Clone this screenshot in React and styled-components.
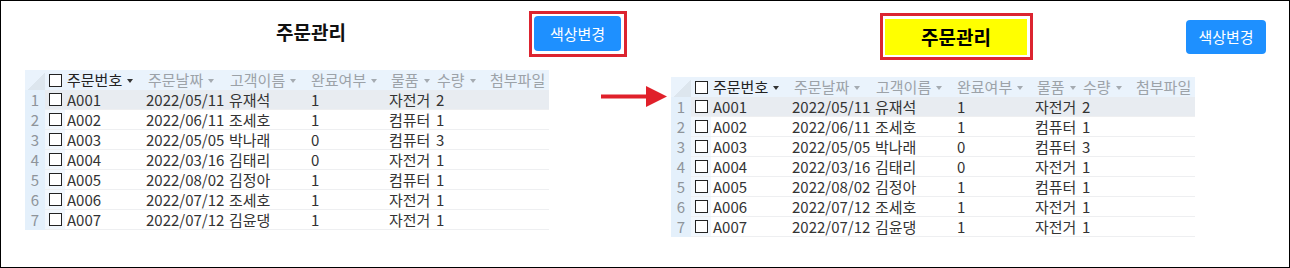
import React from 'react';
import styled, { createGlobalStyle } from 'styled-components';

const GlobalStyle = createGlobalStyle`
  body {
    margin: 0;
    background: #fff;
    font-family: "Noto Sans CJK KR", "Noto Sans", sans-serif;
  }
`;

const orders = [
  { id: 'A001', date: '2022/05/11', name: '유재석', done: '1', item: '자전거', qty: '2' },
  { id: 'A002', date: '2022/06/11', name: '조세호', done: '1', item: '컴퓨터', qty: '1' },
  { id: 'A003', date: '2022/05/05', name: '박나래', done: '0', item: '컴퓨터', qty: '3' },
  { id: 'A004', date: '2022/03/16', name: '김태리', done: '0', item: '자전거', qty: '1' },
  { id: 'A005', date: '2022/08/02', name: '김정아', done: '1', item: '컴퓨터', qty: '1' },
  { id: 'A006', date: '2022/07/12', name: '조세호', done: '1', item: '자전거', qty: '1' },
  { id: 'A007', date: '2022/07/12', name: '김윤댕', done: '1', item: '자전거', qty: '1' },
];

const columns = ['주문날짜', '고객이름', '완료여부', '물품', '수량'];

const COLS = '20px 20px 81px 82px 81px 80px 46px 53px 61px';

const Frame = styled.div`
  position: relative;
  width: 1290px;
  height: 268px;
  box-sizing: border-box;
  border: 1px solid #000;
  display: flex;
  overflow: hidden;
`;

const Panel = styled.section`
  width: ${p => p.$width}px;
  display: flex;
  flex-direction: column;
`;

const TopBar = styled.div`
  height: ${p => p.$height}px;
  display: flex;
  align-items: flex-start;
`;

const Title = styled.h2`
  margin: 19px 0 0 250px;
  width: 120px;
  text-align: center;
  font-size: 19px;
  line-height: 24px;
  font-weight: 700;
  color: #111;
`;

const Marked = styled.div`
  box-sizing: border-box;
  border: 3px solid #dc2430;
  padding: ${p => p.$pad};
  margin: ${p => p.$margin};
  width: ${p => p.$width}px;
`;

const YellowTitle = styled.h2`
  margin: 0;
  height: 36px;
  background: #ffff00;
  font-size: 19px;
  line-height: 36px;
  font-weight: 700;
  text-align: center;
  color: #000;
`;

const ColorButton = styled.button`
  display: block;
  margin: ${p => p.$margin || 0};
  width: ${p => p.$w}px;
  height: ${p => p.$h}px;
  padding: 0;
  border: none;
  border-radius: 4px;
  background: #1e90ff;
  color: #fff;
  font-family: "Noto Sans CJK KR", sans-serif;
  font-size: 15px;
  line-height: ${p => p.$h}px;
  cursor: pointer;
`;

const Grid = styled.div`
  margin-left: ${p => p.$left}px;
  width: 524px;
  font-size: 15px;
  color: #333;
`;

const Row = styled.div`
  display: grid;
  grid-template-columns: ${COLS};
  height: 20px;
  line-height: 20px;
  white-space: nowrap;
`;

const HeadRow = styled(Row)`
  background: #eaf3fc;
`;

const Corner = styled.div`
  background: linear-gradient(135deg, #eaf3fc 55%, #dde6ee 56%);
`;

const RowNum = styled.div`
  background: #e4f0fb;
  color: #8e949a;
  text-align: center;
  font-size: 15px;
`;

const Cell = styled.div`
  padding-left: ${p => p.$pad ?? 1}px;
  background: ${p => (p.$hl ? '#e8ecf1' : '#fff')};
  border-bottom: 1px solid #eeeff1;
  box-sizing: border-box;
  overflow: hidden;
`;

const CheckCell = styled(Cell)`
  background: ${p => (p.$hl ? '#e8ecf1' : '#f1f7fd')};
  display: flex;
  align-items: center;
  padding-left: 4px;
`;

const HeadCheck = styled.div`
  display: flex;
  align-items: center;
  padding-left: 4px;
`;

const Box = styled.span`
  display: block;
  width: 13px;
  height: 13px;
  box-sizing: border-box;
  border: 1px solid #222;
  background: #fff;
`;

const HeadCell = styled.div`
  padding-left: ${p => p.$pad ?? 2}px;
  color: ${p => (p.$active ? '#222' : '#9ca2a8')};
  overflow: hidden;
`;

const Caret = styled.span`
  display: inline-block;
  margin-left: 5px;
  vertical-align: middle;
  border-left: 3px solid transparent;
  border-right: 3px solid transparent;
  border-top: 4px solid ${p => (p.$active ? '#333' : '#a5abb1')};
  position: relative;
  top: -1px;
`;

const Arrow = styled.svg`
  position: absolute;
  left: 599px;
  top: 84px;
`;

function OrderGrid({ left }) {
  return (
    <Grid $left={left}>
      <HeadRow>
        <Corner />
        <HeadCheck><Box /></HeadCheck>
        <HeadCell $active $pad={2}>주문번호<Caret $active /></HeadCell>
        {columns.map(c => (
          <HeadCell key={c}>{c}<Caret /></HeadCell>
        ))}
        <HeadCell $pad={2}>첨부파일</HeadCell>
      </HeadRow>
      {orders.map((o, i) => {
        const hl = i === 0;
        return (
          <Row key={o.id}>
            <RowNum>{i + 1}</RowNum>
            <CheckCell $hl={hl}><Box /></CheckCell>
            <Cell $hl={hl} $pad={2}>{o.id}</Cell>
            <Cell $hl={hl} $pad={0}>{o.date}</Cell>
            <Cell $hl={hl}>{o.name}</Cell>
            <Cell $hl={hl} $pad={2}>{o.done}</Cell>
            <Cell $hl={hl} $pad={0}>{o.item}</Cell>
            <Cell $hl={hl}>{o.qty}</Cell>
            <Cell $hl={hl} />
          </Row>
        );
      })}
    </Grid>
  );
}

export default function App() {
  return (
    <>
      <GlobalStyle />
      <Frame>
        <Panel $width={645}>
          <TopBar $height={69}>
            <Title>주문관리</Title>
            <Marked $width={98} $pad="2px 3px 3px 2px" $margin="10px 0 0 158px">
              <ColorButton $w={87} $h={35}>색상변경</ColorButton>
            </Marked>
          </TopBar>
          <OrderGrid left={24} />
        </Panel>
        <Panel $width={643}>
          <TopBar $height={76}>
            <Marked $width={153} $pad="3px 3px 2px 2px" $margin="12px 0 0 234px">
              <YellowTitle>주문관리</YellowTitle>
            </Marked>
            <ColorButton $w={80} $h={34} $margin="19px 0 0 153px">색상변경</ColorButton>
          </TopBar>
          <OrderGrid left={25} />
        </Panel>
        <Arrow width="68" height="24" viewBox="0 0 68 24">
          <rect x="1" y="9.5" width="48" height="4" fill="#e0202a" />
          <polygon points="46,1 67,11.5 46,22" fill="#e0202a" />
        </Arrow>
      </Frame>
    </>
  );
}
